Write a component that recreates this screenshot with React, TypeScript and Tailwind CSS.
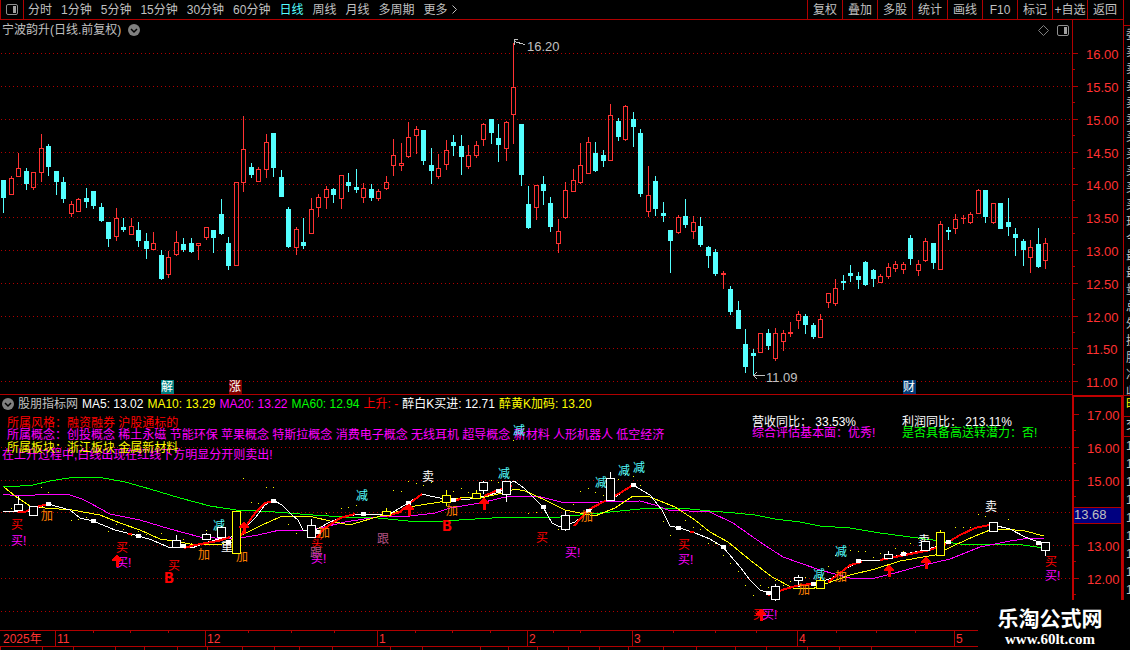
type Candle = [x: number, high: number, top: number, bottom: number, low: number, up: 0 | 1];
type Box = [x: number, y: number, w: number, h: number, wickTop: number, wickBottom: number];

const PERIODS = [
  "分时",
  "1分钟",
  "5分钟",
  "15分钟",
  "30分钟",
  "60分钟",
  "日线",
  "周线",
  "月线",
  "多周期",
];

const TOOLS = ["复权", "叠加", "多股", "统计", "画线", "F10", "标记", "+自选", "返回"];

const CANDLES: Candle[] = [
  [3, 180, 180, 198, 213, 0], [11, 176, 178, 195, 195, 1], [18, 153, 168, 177, 177, 1], [26, 168, 171, 184, 190, 0],
  [33, 172, 172, 188, 190, 1], [41, 134, 148, 173, 182, 1], [48, 144, 146, 167, 176, 0], [56, 171, 171, 182, 195, 0],
  [63, 177, 182, 199, 203, 0], [71, 201, 204, 214, 217, 1], [78, 198, 199, 212, 212, 1], [86, 188, 198, 202, 208, 0],
  [93, 191, 191, 206, 209, 0], [101, 203, 207, 221, 222, 0], [108, 222, 222, 239, 247, 0], [116, 208, 218, 237, 241, 1],
  [123, 218, 227, 230, 232, 0], [131, 218, 226, 235, 235, 1], [138, 222, 230, 241, 247, 0], [146, 233, 241, 249, 259, 0],
  [153, 232, 243, 250, 250, 1], [161, 250, 255, 279, 280, 0], [168, 251, 257, 275, 278, 1], [176, 231, 242, 255, 256, 1],
  [183, 238, 244, 250, 252, 0], [191, 238, 243, 252, 253, 0], [198, 243, 243, 246, 260, 1], [206, 227, 227, 238, 240, 1],
  [213, 230, 230, 238, 253, 0], [221, 199, 214, 234, 235, 0], [228, 237, 243, 266, 270, 0], [236, 182, 182, 266, 266, 1],
  [243, 116, 149, 183, 192, 1], [251, 163, 167, 175, 178, 0], [258, 167, 169, 182, 182, 1], [266, 134, 142, 170, 178, 1],
  [273, 133, 133, 168, 177, 0], [281, 170, 177, 197, 197, 0], [288, 207, 209, 247, 248, 0], [296, 227, 229, 248, 255, 1],
  [303, 218, 242, 246, 249, 0], [311, 198, 209, 234, 234, 1], [318, 194, 197, 208, 217, 1], [326, 186, 189, 198, 209, 1],
  [333, 188, 189, 195, 203, 0], [341, 175, 175, 199, 209, 1], [348, 173, 182, 186, 192, 0], [356, 169, 187, 190, 193, 0],
  [363, 183, 188, 198, 203, 1], [371, 184, 189, 198, 201, 0], [378, 189, 191, 199, 201, 1], [386, 176, 182, 189, 190, 1],
  [393, 139, 155, 166, 176, 1], [401, 143, 163, 166, 171, 1], [408, 122, 137, 157, 158, 1], [416, 126, 129, 136, 154, 1],
  [423, 130, 130, 161, 165, 0], [431, 148, 165, 171, 184, 0], [438, 154, 168, 177, 179, 1], [446, 140, 150, 165, 170, 1],
  [453, 135, 142, 146, 156, 0], [461, 135, 146, 157, 175, 0], [468, 145, 155, 167, 169, 1], [476, 141, 145, 156, 158, 1],
  [483, 123, 124, 140, 146, 1], [491, 119, 119, 133, 144, 0], [498, 124, 138, 145, 162, 0], [506, 121, 122, 149, 161, 1],
  [513, 43, 87, 115, 144, 1], [521, 124, 124, 175, 186, 0], [528, 186, 204, 228, 229, 0], [536, 185, 185, 208, 220, 1],
  [543, 176, 184, 191, 205, 0], [550, 197, 203, 227, 232, 0], [558, 219, 231, 244, 253, 1], [565, 182, 190, 218, 219, 1],
  [573, 169, 180, 192, 192, 1], [580, 143, 165, 183, 184, 1], [588, 137, 142, 174, 174, 1], [595, 142, 153, 171, 172, 0],
  [603, 150, 155, 161, 167, 0], [610, 104, 115, 161, 161, 1], [618, 118, 121, 137, 141, 0], [625, 105, 106, 140, 141, 1],
  [633, 112, 119, 127, 147, 0], [640, 129, 133, 194, 197, 0], [648, 166, 195, 212, 217, 1], [655, 176, 181, 209, 216, 0],
  [663, 202, 213, 216, 222, 0], [670, 230, 230, 241, 273, 0], [678, 215, 217, 233, 234, 1], [685, 199, 216, 225, 228, 0],
  [693, 216, 222, 232, 239, 1], [700, 217, 226, 245, 247, 0], [708, 246, 247, 256, 268, 0], [715, 249, 252, 274, 276, 0],
  [723, 271, 273, 275, 289, 1], [730, 286, 289, 312, 315, 0], [738, 301, 310, 329, 329, 0], [745, 329, 344, 367, 373, 0],
  [753, 349, 353, 356, 376, 0], [760, 333, 333, 353, 353, 1], [768, 329, 333, 346, 350, 0], [775, 328, 333, 359, 361, 1],
  [783, 330, 333, 342, 351, 1], [790, 322, 332, 334, 337, 1], [798, 311, 314, 321, 329, 1], [805, 314, 316, 325, 334, 0],
  [813, 323, 325, 337, 339, 0], [820, 314, 319, 338, 338, 1], [828, 293, 293, 303, 308, 1], [835, 279, 288, 304, 306, 1],
  [843, 275, 281, 283, 290, 0], [850, 265, 273, 276, 282, 0], [858, 272, 276, 280, 289, 0], [865, 261, 262, 285, 286, 0],
  [873, 269, 270, 279, 287, 0], [880, 274, 276, 283, 283, 1], [888, 263, 267, 277, 279, 1], [895, 261, 264, 269, 272, 1],
  [903, 262, 264, 270, 274, 1], [910, 235, 238, 259, 265, 0], [918, 260, 264, 271, 276, 1], [925, 238, 241, 261, 262, 1],
  [933, 243, 243, 263, 269, 0], [940, 221, 224, 270, 270, 1], [948, 227, 230, 232, 240, 0], [955, 214, 219, 229, 234, 1],
  [963, 215, 218, 219, 224, 1], [970, 212, 214, 223, 224, 1], [978, 189, 190, 214, 214, 1], [985, 190, 190, 217, 223, 0],
  [993, 203, 203, 223, 224, 1], [1000, 203, 203, 229, 229, 0], [1008, 198, 222, 227, 236, 0], [1015, 228, 234, 238, 256, 0],
  [1023, 239, 241, 250, 266, 0], [1030, 240, 247, 258, 273, 1], [1038, 228, 244, 267, 268, 0], [1045, 238, 243, 261, 269, 1],
];

const PRICE_TICKS: [string, number][] = [
  ["16.00", 53], ["15.50", 86], ["15.00", 119], ["14.50", 152], ["14.00", 184], ["13.50", 217],
  ["13.00", 250], ["12.50", 283], ["12.00", 316], ["11.50", 348], ["11.00", 381],
];

const INDICATOR_TICKS: [string, number][] = [
  ["17.00", 414], ["16.00", 447], ["15.00", 480], ["13.00", 545], ["12.00", 578],
];

const INDICATOR_GRID = [447, 480, 512, 545, 578, 611];

const MA60 =
  "3,487 20,486 33,485 50,481 75,477 98,477 125,482 150,489 180,498 210,506 236,510 275,512 300,514 313,515 345,517 378,518 408,521 443,521 475,519 510,517 560,517 590,514 620,511 650,508 680,508 710,511 735,513 755,515 775,519 800,522 820,526 850,528 880,533 910,537 940,541 960,544 1015,544 1030,546 1044,548";
const MA20 =
  "3,494 10,495 35,495 40,494 67,494 82,499 90,503 110,514 140,520 170,529 200,537 215,538 240,538 258,535 280,530 300,531 320,528 345,522 377,517 410,516 435,513 450,508 480,503 510,496 537,496 565,503 600,502 640,501 655,505 668,510 710,512 733,523 750,535 763,544 783,557 800,563 820,570 850,578 875,578 895,573 920,566 950,559 980,547 1010,541 1030,538 1044,538";
const MA10 =
  "4,487 15,496 30,506 45,508 72,510 100,515 120,523 140,530 160,539 180,542 195,545 222,544 240,536 262,525 280,517 300,516 313,517 330,521 345,524 353,524 380,516 400,511 415,506 440,502 460,498 485,497 503,493 515,489 525,491 545,500 565,510 580,513 595,516 615,508 633,496 650,497 675,507 695,520 710,532 728,542 750,560 772,577 793,588 812,589 825,584 850,575 875,569 900,561 935,555 955,545 975,536 990,530 1005,529 1025,531 1044,536";
const MA5 =
  "3,511 30,511 48,504 70,510 80,518 93,521 115,530 135,535 152,540 168,547 192,548 205,543 222,538 240,536 245,528 255,518 265,505 273,500 282,505 292,515 298,520 303,530 312,532 330,522 345,516 363,514 376,515 390,514 408,503 422,494 430,496 450,500 470,499 485,496 500,492 505,486 514,481 524,488 543,507 552,523 560,527 575,522 590,510 605,501 615,497 633,485 650,495 662,510 670,526 680,528 695,533 710,539 723,547 740,567 750,580 760,590 770,593 793,587 815,584 832,578 845,569 860,561 880,560 900,555 920,551 942,545 960,535 975,528 993,525 1010,529 1025,537 1041,543";

const RISING = [
  "18,512 25,512 33,508 48,504",
  "128,534 132,534",
  "184,548 195,545 218,541 230,537",
  "241,536 248,523 256,512 265,503 273,501",
  "317,537 325,528 340,518 355,514",
  "387,516 400,512 410,503 422,494",
  "451,501 461,499",
  "484,496 498,490 512,486",
  "574,526 588,510 605,501 620,493 633,485",
  "690,532 694,532",
  "768,595 785,589 800,585 812,584",
  "828,582 840,573 850,565 862,562",
  "880,560 900,556 915,553 930,550 945,544 960,535 975,528 989,525",
];

const WHITE_BOXES: Box[] = [
  [14, 504, 9, 7, 496, 511], [29, 506, 9, 10, 506, 516], [172, 540, 9, 8, 535, 548], [202, 534, 9, 6, 533, 540],
  [217, 527, 9, 11, 526, 538], [307, 525, 9, 13, 519, 538], [479, 482, 9, 9, 481, 494], [502, 481, 9, 14, 481, 502],
  [561, 515, 9, 15, 511, 531], [606, 478, 9, 23, 472, 501], [771, 586, 9, 14, 584, 601], [794, 577, 9, 4, 575, 585],
  [884, 554, 9, 5, 551, 559], [921, 541, 9, 10, 541, 551], [989, 522, 9, 10, 522, 532], [1041, 542, 9, 9, 542, 556],
];

const YELLOW_BOXES: Box[] = [
  [232, 511, 9, 43, 511, 554], [382, 511, 9, 5, 508, 516], [442, 495, 9, 8, 490, 506], [472, 493, 9, 6, 490, 499],
  [816, 580, 9, 9, 577, 589], [936, 532, 9, 24, 530, 556],
];

const NODES = [
  [48, 504], [93, 521], [138, 536], [183, 546], [228, 542], [273, 501], [318, 532], [363, 514], [408, 503],
  [453, 500], [498, 491], [543, 507], [588, 511], [633, 485], [678, 528], [723, 547], [768, 593], [813, 584],
  [858, 561], [903, 554], [948, 542], [1038, 543],
];

const DOTS = [
  [41, 487], [48, 492], [11, 508], [71, 520], [78, 519], [86, 517], [108, 531], [116, 524], [123, 529], [131, 535],
  [138, 531], [146, 534], [161, 533], [183, 539], [191, 543], [206, 530], [243, 478], [266, 487], [273, 487],
  [251, 502], [258, 503], [288, 524], [296, 533], [326, 513], [341, 508], [348, 507], [356, 505], [393, 490],
  [401, 491], [408, 481], [416, 483], [423, 485], [431, 482], [453, 491], [461, 488], [468, 492], [491, 480],
  [498, 482], [513, 440], [528, 513], [536, 512], [558, 529], [573, 504], [580, 491], [588, 488], [595, 492],
  [603, 495], [618, 479], [625, 474], [633, 476], [640, 485], [663, 521], [670, 535], [685, 520], [693, 527],
  [700, 529], [708, 543], [715, 543], [723, 555], [730, 563], [738, 571], [745, 585], [753, 595], [760, 585],
  [768, 587], [775, 580], [783, 585], [790, 581], [805, 577], [828, 566], [835, 555], [850, 550], [858, 551],
  [865, 551], [873, 557], [880, 553], [895, 548], [903, 551], [910, 543], [918, 538], [955, 527], [963, 527],
  [970, 527], [978, 514], [985, 516], [1008, 519],
];

const ARROWS = [[117, 555], [244, 522], [409, 504], [484, 498], [761, 609], [889, 565], [926, 557]];

const SIGNALS: { text: string; color: string; at: number[][] }[] = [
  { text: "买", color: "fill-[#ff0000]", at: [[11, 525], [116, 548], [168, 566], [311, 543], [536, 538], [678, 545], [1045, 562], [753, 615]] },
  { text: "买!", color: "fill-[#ff00ff]", at: [[11, 541], [116, 563], [311, 559], [565, 553], [678, 560], [1045, 576], [762, 615]] },
  { text: "加", color: "fill-[#ff8000]", at: [[41, 516], [198, 555], [236, 557], [318, 533], [446, 511], [581, 517], [798, 590], [835, 577]] },
  { text: "减", color: "fill-[#54ffff]", at: [[213, 526], [356, 496], [498, 474], [595, 483], [618, 471], [633, 468], [513, 431], [813, 575], [835, 552]] },
  { text: "卖", color: "fill-white", at: [[422, 477], [918, 541], [985, 507]] },
  { text: "重", color: "fill-white", at: [[221, 547]] },
  { text: "跟", color: "fill-[#b05080]", at: [[377, 539], [310, 553]] },
];

const MONTHS: [string, number][] = [
  ["11", 55], ["12", 205], ["1", 377], ["2", 527], ["3", 632], ["4", 797], ["5", 954],
];

const WEEKS = [93, 130, 168, 248, 291, 334, 415, 452, 490, 553, 580, 673, 715, 756, 836, 876, 915];

const TAB_EDGES = [
  0, 42, 73, 115, 144, 177, 207, 242, 274, 299, 332, 390, 422, 480, 508, 537, 568, 599, 628, 663, 696, 735, 766, 807,
  839, 871,
];

const ChevronBadge = () => (
  <svg className="size-3 shrink-0" viewBox="0 0 12 12">
    <circle cx="6" cy="6" r="6" className="fill-[#808080]" />
    <path d="M3 5l3 3 3-3" className="fill-none stroke-black" strokeWidth="1.5" />
  </svg>
);

const PanelIcon = () => (
  <svg className="h-[11px] w-3 shrink-0" viewBox="0 0 12 11">
    <rect x="0.5" y="0.5" width="11" height="10" rx="1.5" className="fill-none stroke-[#909090]" />
    <rect x="7" y="2" width="3" height="7" className="fill-[#a0a0a0]" />
  </svg>
);

const GridLine = ({ y }: { y: number }) => (
  <line x1="1" x2="100%" y1={y + 0.5} y2={y + 0.5} className="stroke-[#b00000]" strokeDasharray="1 3" />
);

const CandleShape = ({ candle: [x, high, top, bottom, low, up] }: { candle: Candle }) => {
  if (up && bottom - top > 2) {
    return (
      <g className="fill-none stroke-[#ff3232]">
        <path d={`M${x + 0.5} ${high}V${top}M${x + 0.5} ${bottom}V${low}`} />
        <rect x={x - 1.5} y={top + 0.5} width="4" height={bottom - top - 1} />
      </g>
    );
  }
  return (
    <g className={up ? "fill-[#ff3232]" : "fill-[#54ffff]"}>
      <rect x={x} y={high} width="1" height={low - high} />
      <rect x={x - 2} y={top} width="5" height={bottom - top} />
    </g>
  );
};

const BoxShape = ({ box: [x, y, w, h, wickTop, wickBottom] }: { box: Box }) => (
  <g>
    <path d={`M${x + 4.5} ${wickTop}V${y}M${x + 4.5} ${y + h}V${wickBottom}`} />
    <rect x={x + 0.5} y={y + 0.5} width={w - 1} height={h - 1} className="fill-black" />
  </g>
);

const PriceChart = () => (
  <svg className="absolute inset-0 size-full text-[13px]" shapeRendering="crispEdges">
    <g transform="translate(0,-20)">
      {PRICE_TICKS.map(([label, y]) => (
        <GridLine key={label} y={y} />
      ))}
      {CANDLES.map((candle) => (
        <CandleShape key={candle[0]} candle={candle} />
      ))}
      {/* High and low callouts */}
      <g className="fill-none stroke-[#c0c0c0]">
        <path d="M525 44.5L514 41.5M518 39.5H514V45" />
        <path d="M765 375.5H754M757 372l-3.500 3.500 3.500 3.500" />
      </g>
      <g className="fill-[#c0c0c0]" dominantBaseline="central">
        <text x="527" y="46">16.20</text>
        <text x="766" y="377">11.09</text>
      </g>
      {/* Event flags */}
      <rect x="161" y="380" width="13" height="14" className="fill-[#008080]" />
      <rect x="229" y="380" width="13" height="14" className="fill-[#800000]" />
      <rect x="903" y="380" width="13" height="14" className="fill-[#003c78]" />
      <g className="fill-white text-[12px]" dominantBaseline="central">
        <text x="161" y="387">解</text>
        <text x="229" y="387">涨</text>
        <text x="903" y="387">财</text>
      </g>
    </g>
  </svg>
);

const IndicatorChart = () => (
  <svg className="absolute inset-0 size-full text-[12px]" shapeRendering="crispEdges">
    <g transform="translate(0,-395)">
      {INDICATOR_GRID.map((y) => (
        <GridLine key={y} y={y} />
      ))}
      <g className="fill-none">
        <polyline points={MA60} className="stroke-[#00ff00]" />
        <polyline points={MA20} className="stroke-[#ff00ff]" />
        <polyline points={MA10} className="stroke-[#ffff00]" />
        <polyline points={MA5} className="stroke-white" />
        {RISING.map((points) => (
          <polyline key={points} points={points} className="stroke-[#ff0000]" strokeWidth="2" />
        ))}
      </g>
      {DOTS.map(([x, y]) => (
        <rect key={`${x}-${y}`} x={x} y={y} width="1" height="1" className="fill-[#ffff00]" />
      ))}
      {NODES.map(([x, y]) => (
        <rect key={x} x={x - 2} y={y - 2} width="5" height="4" className="fill-white" />
      ))}
      <g dominantBaseline="central">
        {SIGNALS.map(({ text, color, at }) =>
          at.map(([x, y]) => (
            <text key={`${text}-${x}`} x={x} y={y} className={color}>
              {text}
            </text>
          ))
        )}
        <g className="fill-[#ff0000] font-['Liberation_Mono',monospace] text-[16px] font-bold">
          <text x="164" y="579">B</text>
          <text x="442" y="527">B</text>
        </g>
      </g>
      <g className="stroke-white">
        {WHITE_BOXES.map((box) => (
          <BoxShape key={box[0]} box={box} />
        ))}
      </g>
      <g className="stroke-[#ffff00]">
        {YELLOW_BOXES.map((box) => (
          <BoxShape key={box[0]} box={box} />
        ))}
      </g>
      {ARROWS.map(([x, y]) => (
        <path
          key={x}
          d={`M${x - 0.5} ${y}h1l4.500 5v1h-3v6h-3v-6h-4v-1z`}
          className="fill-[#ff0000]"
        />
      ))}
    </g>
  </svg>
);

const AxisScale = ({ ticks, offset }: { ticks: [string, number][]; offset: number }) => (
  <svg className="absolute inset-0 size-full text-[13px]" shapeRendering="crispEdges">
    <g transform={`translate(0,${-offset})`}>
      {ticks.map(([label, y]) => (
        <g key={label}>
          <rect x="0" y={y} width="5" height="1" className="fill-[#b00000]" />
          <rect x="0" y={y + 16} width="2" height="1" className="fill-[#b00000]" />
          <text x="13" y={y + 1} className="fill-[#ff3232]" dominantBaseline="central">
            {label}
          </text>
        </g>
      ))}
    </g>
  </svg>
);

const TopBar = () => (
  <header className="flex h-5 items-stretch justify-between border-b border-[#b00000]">
    <div className="flex items-stretch">
      <button className="flex w-6 items-center justify-center border-x border-[#b00000]" aria-label="侧栏">
        <PanelIcon />
      </button>
      <nav className="flex items-center gap-[9px] pl-1">
        {PERIODS.map((name) => (
          <button key={name} className={name === "日线" ? "text-[#54ffff]" : ""}>
            {name}
          </button>
        ))}
        <button className="flex items-center gap-1">
          更多
          <svg className="h-[9px] w-[5px]" viewBox="0 0 5 9">
            <path d="M0.500 0.500l4 4-4 4" className="fill-none stroke-[#c0c0c0]" />
          </svg>
        </button>
      </nav>
    </div>
    <div className="flex pr-px">
      {TOOLS.map((name) => (
        <button key={name} className="w-[35px] border-l border-[#b00000] text-center whitespace-nowrap">
          {name}
        </button>
      ))}
    </div>
  </header>
);

const IndicatorLegend = () => (
  <div className="relative flex h-[18px] items-center gap-1 pl-0.5 whitespace-nowrap">
    <ChevronBadge />
    <span>股朋指标网</span>
    <span className="text-white">MA5: 13.02</span>
    <span className="text-[#ffff00]">MA10: 13.29</span>
    <span className="text-[#ff00ff]">MA20: 13.22</span>
    <span className="text-[#00ff00]">MA60: 12.94</span>
    <span className="text-[#ff0000]">上升: -</span>
    <span className="text-white">醉白K买进: 12.71</span>
    <span className="text-[#ffff00]">醉黄K加码: 13.20</span>
  </div>
);

// Notes that the formula prints over the plot
const IndicatorNotes = () => (
  <div className="whitespace-nowrap">
    <p className="absolute top-[21px] left-[7px] text-[#ff0000]">所属风格：融资融券 沪股通标的</p>
    <p className="absolute top-[33px] left-[7px] text-[#ff00ff]">
      所属概念：创投概念 稀土永磁 节能环保 苹果概念 特斯拉概念 消费电子概念 无线耳机 超导概念 新材料 人形机器人 低空经济
    </p>
    <p className="absolute top-[53px] left-0.5 text-[#ff00ff]">
      在上升过程中,白线出现在红线下方明显分开则卖出!
    </p>
    <p className="absolute top-[46px] left-[7px] text-[#ffff00]">所属板块：浙江板块 金属新材料</p>
    <p className="absolute top-[31px] left-[752px] text-[#ff00ff]">综合评估基本面：优秀!</p>
    <p className="absolute top-[20px] left-[752px] text-white">营收同比： 33.53%</p>
    <p className="absolute top-[20px] left-[902px] text-white">利润同比： 213.11%</p>
    <p className="absolute top-[31px] left-[902px] text-[#00ff00]">是否具备高送转潜力：否!</p>
  </div>
);

const Timeline = () => (
  <svg className="block h-5 w-full text-[12px]" shapeRendering="crispEdges">
    <g className="fill-[#b00000]">
      <rect x="0" y="0" width="100%" height="1" />
      <rect x="0" y="16" width="100%" height="1" />
      {MONTHS.map(([label, x]) => (
        <rect key={label} x={x} y="0" width="1" height="16" />
      ))}
      {WEEKS.map((x) => (
        <rect key={x} x={x} y="0" width="1" height="3" />
      ))}
      {TAB_EDGES.map((x) => (
        <rect key={x} x={x} y="16" width="1" height="4" />
      ))}
    </g>
    <g className="fill-[#ff3232]" dominantBaseline="central">
      <text x="3" y="9">2025年</text>
      {MONTHS.map(([label, x]) => (
        <text key={label} x={x + 2} y="9">
          {label}
        </text>
      ))}
    </g>
  </svg>
);

export default function App() {
  return (
    <div className="relative flex h-screen min-h-[650px] overflow-hidden bg-black font-['Liberation_Sans','Noto_Sans_CJK_SC',sans-serif] text-[12px] leading-[14px] text-[#c0c0c0]">
      <div className="flex min-w-0 flex-1 flex-col">
        <TopBar />

        {/* Price panel */}
        <section className="flex h-[375px]">
          <div className="relative min-w-0 flex-1 overflow-hidden border-b border-[#b00000]">
            <PriceChart />
            <div className="relative flex items-center justify-between pt-[3px] pr-[3px] pl-0.5">
              <h1 className="flex items-center gap-[7px]">
                宁波韵升(日线.前复权)
                <ChevronBadge />
              </h1>
              <div className="flex items-center gap-2">
                <svg className="size-[11px]" viewBox="0 0 11 11">
                  <path d="M5.500 0.500l5 5-5 5-5-5z" className="fill-none stroke-[#808080]" />
                </svg>
                <PanelIcon />
              </div>
            </div>
          </div>
          <aside className="relative w-[51px] border-l border-[#b00000]">
            <AxisScale ticks={PRICE_TICKS} offset={20} />
          </aside>
        </section>

        {/* Indicator panel */}
        <section className="flex h-[235px]">
          <div className="relative min-w-0 flex-1 overflow-hidden">
            <IndicatorNotes />
            <IndicatorChart />
            <IndicatorLegend />
          </div>
          <aside className="relative w-[51px] border-x-2 border-t-2 border-[#c00000]">
            <AxisScale ticks={INDICATOR_TICKS} offset={397} />
            <div className="absolute inset-x-0 top-[110px] h-[17px] border-y border-[#b00000] bg-[#000080] text-[13px]">
              13.68
            </div>
          </aside>
        </section>

        <Timeline />
      </div>

      {/* Edge of the quote panel */}
      <aside className="w-[7px] overflow-hidden border-l border-[#b00000] pl-0.5 text-[12px] leading-[17px]">
        <div className="-ml-0.5 h-[26px] border-b border-[#b00000]" />
        <div className="h-[369px] w-3 overflow-hidden pt-px break-all">
          委卖卖卖卖卖买买买买买现今最最量总外换股净收
        </div>
        <div className="-ml-0.5 h-[22px] w-3 border-y border-[#b00000] pl-0.5 text-[#ffff00]">时</div>
        <div className="-ml-0.5 h-5 w-3 border-b border-[#b00000] pl-0.5">交</div>
        <div className="w-3 leading-[18px] break-all">111111111</div>
      </aside>

      {/* Watermark */}
      <footer className="absolute right-0 bottom-0 flex h-[50px] w-[152px] flex-col items-center bg-black pt-2 pr-2 font-bold text-white">
        <span className="text-[21px] leading-[22px]">乐淘公式网</span>
        <a href="#" className="font-['Liberation_Serif',serif] text-[15px] leading-[18px]">
          www.60lt.com
        </a>
      </footer>
    </div>
  );
}
